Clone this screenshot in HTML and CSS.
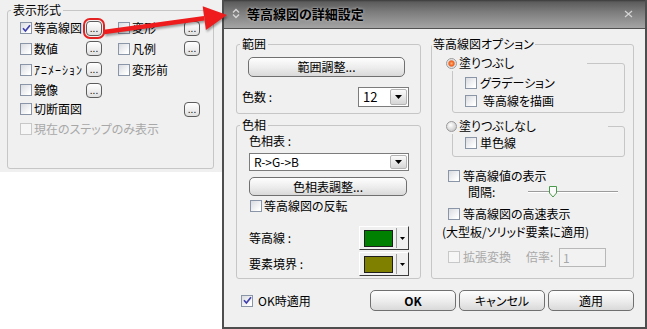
FILE: index.html
```html
<!DOCTYPE html>
<html>
<head>
  <meta charset="utf-8">
  <title>等高線図の詳細設定</title>
  <link rel="stylesheet" href="styles.css">
</head>
<body>
  <div class="desktop">
    <!-- 元のパネル -->
    <div class="side-panel">
      <fieldset class="group display-group">
        <legend>表示形式</legend>
        <div class="display-grid">
          <label class="check c1"><span class="box"><svg width="9" height="9" viewBox="0 0 9 9"><path d="M1 4.3 L3.4 7 L8 1.3" fill="none" stroke="#3f3fae" stroke-width="1.7"/></svg></span>等高線図</label>
          <button class="dots marked">...</button>
          <label class="check"><span class="box"></span>変形</label>
          <button class="dots">...</button>

          <label class="check c1"><span class="box"></span>数値</label>
          <button class="dots">...</button>
          <label class="check"><span class="box"></span>凡例</label>
          <button class="dots">...</button>

          <label class="check c1"><span class="box"></span><span class="narrow">ｱﾆﾒｰｼｮﾝ</span></label>
          <button class="dots">...</button>
          <label class="check"><span class="box"></span>変形前</label>

          <label class="check c1"><span class="box"></span>鏡像</label>
          <button class="dots">...</button>

          <label class="check c1-3"><span class="box"></span>切断面図</label>
          <button class="dots c4">...</button>

          <label class="check disabled c-all"><span class="box"></span>現在のステップのみ表示</label>
        </div>
      </fieldset>
    </div>

    <!-- 詳細設定ダイアログ -->
    <div class="dialog">
      <div class="titlebar">
        <svg class="title-icon" width="8" height="11" viewBox="0 0 8 11"><path d="M1 4.5 L4 1.5 L7 4.5 M1 6.5 L4 9.5 L7 6.5" fill="none" stroke="#d6d6d6" stroke-width="1.4"/></svg>
        <span class="title-text">等高線図の詳細設定</span>
        <svg class="close" width="9" height="8" viewBox="0 0 9 8"><path d="M1 1 L8 7 M8 1 L1 7" fill="none" stroke="#d4d4d4" stroke-width="1.2"/></svg>
      </div>

      <div class="dialog-body">
        <div class="columns">
          <div class="left-col">
            <fieldset class="group range-group">
              <legend>範囲</legend>
              <button class="btn range-btn">範囲調整...</button>
              <div class="field-row range-row">
                <span>色数 :</span>
                <div class="combo count-combo">
                  <span class="combo-value">12</span>
                  <span class="combo-arrow"><svg width="7" height="4" viewBox="0 0 7 4"><path d="M0 0 H7 L3.5 4 Z" fill="#000"/></svg></span>
                </div>
              </div>
            </fieldset>

            <fieldset class="group hue-group">
              <legend>色相</legend>
              <div class="plain-label">色相表 :</div>
              <div class="combo table-combo">
                <span class="combo-value">R-&gt;G-&gt;B</span>
                <span class="combo-arrow"><svg width="7" height="4" viewBox="0 0 7 4"><path d="M0 0 H7 L3.5 4 Z" fill="#000"/></svg></span>
              </div>
              <button class="btn table-btn">色相表調整...</button>
              <label class="check invert-row"><span class="box"></span>等高線図の反転</label>
              <div class="field-row color-row first">
                <span>等高線 :</span>
                <div class="picker">
                  <span class="swatch green"></span>
                  <span class="picker-arrow"><svg width="5" height="3" viewBox="0 0 5 3"><path d="M0 0 H5 L2.5 3 Z" fill="#000"/></svg></span>
                </div>
              </div>
              <div class="field-row color-row">
                <span>要素境界 :</span>
                <div class="picker">
                  <span class="swatch olive"></span>
                  <span class="picker-arrow"><svg width="5" height="3" viewBox="0 0 5 3"><path d="M0 0 H5 L2.5 3 Z" fill="#000"/></svg></span>
                </div>
              </div>
            </fieldset>
          </div>

          <fieldset class="group options-group">
            <legend>等高線図オプション</legend>

            <fieldset class="sub fill-sub">
              <legend><span class="radio on"></span>塗りつぶし</legend>
              <label class="check opt"><span class="box"></span>グラデーション</label>
              <label class="check opt"><span class="box"></span><span class="pad">等高線を描画</span></label>
            </fieldset>

            <fieldset class="sub nofill-sub">
              <legend><span class="radio"></span>塗りつぶしなし</legend>
              <label class="check opt"><span class="box"></span>単色線</label>
            </fieldset>

            <label class="check opt outer value-row"><span class="box"></span>等高線値の表示</label>
            <div class="interval-row">
              <span class="interval-label">間隔:</span>
              <svg width="92" height="14" viewBox="0 0 92 14">
                <line x1="0" y1="6.5" x2="90" y2="6.5" stroke="#9c9c9c" stroke-width="1"/>
                <line x1="0" y1="7.5" x2="90" y2="7.5" stroke="#ffffff" stroke-width="1"/>
                <path d="M21.5 1.5 H28.5 V8 L25 12 L21.5 8 Z" fill="#fafafa" stroke="#4b9a4b" stroke-width="1"/>
              </svg>
            </div>
            <label class="check opt outer fast-row"><span class="box"></span>等高線図の高速表示</label>
            <div class="note">(大型板/ソリッド要素に適用)</div>
            <div class="scale-row disabled">
              <label class="check opt"><span class="box"></span>拡張変換</label>
              <span class="scale-label">倍率:</span>
              <span class="scale-input">1</span>
            </div>
          </fieldset>
        </div>

        <div class="footer">
          <label class="check opt apply-check"><span class="box"><svg width="9" height="9" viewBox="0 0 9 9"><path d="M1 4.3 L3.4 7 L8 1.3" fill="none" stroke="#3f3fae" stroke-width="1.7"/></svg></span>OK時適用</label>
          <div class="actions">
            <button class="btn action ok">OK</button>
            <button class="btn action">キャンセル</button>
            <button class="btn action">適用</button>
          </div>
        </div>
      </div>
    </div>

    <!-- 指示の矢印 -->
    <svg class="pointer" width="240" height="40" viewBox="0 0 240 40">
      <polygon points="104.3,34.2 103.7,29.8 203.9,16 204.5,20.4" fill="#ee1c1c"/>
      <polygon points="202.7,6.2 227,15 205.9,30" fill="#ee1c1c"/>
    </svg>
  </div>
</body>
</html>
```

FILE: styles.css
```css
/* 等高線図の詳細設定 */
* {
  box-sizing: border-box;
}
html, body {
  margin: 0;
}
body {
  width: 647px;
  height: 329px;
  overflow: hidden;
  background: #fff;
  font-family: "Noto Sans CJK JP", "Noto Sans", sans-serif;
  font-size: 12px;
  line-height: 16px;
  color: #000;
  font-feature-settings: "palt";
}
.desktop {
  position: relative;
  width: 647px;
  height: 329px;
}

/* group boxes */
fieldset.group,
fieldset.sub {
  margin: 0;
  padding: 0;
  min-width: 0;
  border: 1px solid #c6c6c6;
  border-radius: 3px;
}
.group > legend {
  padding: 0 2px;
  line-height: 16px;
}

/* left panel */
.side-panel {
  width: 222px;
  height: 172px;
  background: #f0f0f0;
  padding: 2px 8px 0 7px;
}
.display-group {
  height: 167px;
}
.display-group > legend {
  margin-left: 3px;
}
.display-grid {
  display: grid;
  grid-template-columns: 66px 32px 66px 16px;
  grid-template-rows: 20px 21px 21px 20px 18px 22px;
  align-items: center;
  margin-left: 12px;
}
.c1 { grid-column: 1; }
.c1-3 { grid-column: 1 / 4; }
.c4 { grid-column: 4; }
.c-all { grid-column: 1 / -1; }
.narrow {
  font-feature-settings: normal;
  letter-spacing: 1px;
}

/* check boxes and radios */
.check {
  display: flex;
  align-items: center;
  white-space: nowrap;
}
.box {
  flex: none;
  width: 12px;
  height: 12px;
  margin-right: 2px;
  border: 1px solid #8a96a8;
  background: linear-gradient(135deg, #d9dbe0, #ffffff 85%);
  display: flex;
  align-items: center;
  justify-content: center;
}
.disabled {
  color: #a8a8a8;
}
.disabled .box {
  border-color: #c8c8c8;
  background: #f6f6f6;
}
.radio {
  flex: none;
  width: 11px;
  height: 11px;
  margin-right: 2px;
  border-radius: 50%;
  border: 1px solid #9a9a9a;
  background: radial-gradient(circle at 40% 35%, #ffffff, #d0d0d0 70%, #b4b4b4);
}
.radio.on {
  background: radial-gradient(circle at 50% 50%, #ffb27a 0, #f05a14 2.6px, #d8d8d8 3.6px, #f6f6f6 5px);
}

/* buttons */
.dots {
  width: 16px;
  height: 15px;
  padding: 0 0 2px;
  border: 1px solid #5c5c5c;
  border-radius: 4px;
  background: linear-gradient(#ffffff, #e0e0e0);
  font: 10px/8px "Liberation Sans", sans-serif;
  color: #000;
  display: flex;
  align-items: flex-end;
  justify-content: center;
}
.dots.marked {
  outline: 2px solid #e52222;
  outline-offset: 1px;
}
.btn {
  display: block;
  height: 20px;
  padding: 0;
  border: 1px solid #707070;
  border-radius: 5px;
  background: linear-gradient(#fefefe, #ececec 55%, #d9d9d9);
  font: inherit;
  color: #000;
}

/* dialog window */
.dialog {
  position: absolute;
  left: 222px;
  top: 0;
  width: 425px;
  height: 329px;
  background: #f0f0f0;
  border: 2px solid #4e4e4e;
  border-top: 0;
  display: flex;
  flex-direction: column;
}
.titlebar {
  flex: none;
  height: 29px;
  display: flex;
  align-items: center;
  padding: 0 12px 1px 8px;
  background: linear-gradient(#3a3a3a 0, #5c5c5c 2px, #7a7a7a 40%, #a4a4a4 100%);
  border-bottom: 1px solid #505050;
}
.title-icon {
  margin-right: 7px;
}
.title-text {
  font-size: 13px;
  font-weight: 700;
  color: #000;
  text-shadow: 0 0 3px rgba(255, 255, 255, 0.6);
}
.close {
  margin-left: auto;
}
.dialog-body {
  flex: 1;
  padding: 7px 11px 0 12px;
  display: flex;
  flex-direction: column;
}
.columns {
  display: grid;
  grid-template-columns: 185px 203px;
  column-gap: 10px;
}

/* 範囲 */
.range-group {
  padding: 5px 11px 6px 5px !important;
}
.range-group > legend {
  margin-left: -2px;
}
.range-btn {
  width: 157px;
  margin-left: 6px;
}
.field-row {
  display: flex;
  align-items: center;
  justify-content: space-between;
}
.range-row {
  margin-top: 10px;
  height: 20px;
}
.combo {
  display: flex;
  height: 20px;
  border: 1px solid #7c7c7c;
  background: #fff;
}
.count-combo {
  width: 51px;
}
.combo-value {
  flex: 1;
  padding-left: 4px;
  line-height: 17px;
  font-size: 13px;
}
.combo-arrow {
  width: 17px;
  margin: 1px;
  border: 1px solid #b4b4b4;
  border-radius: 2px;
  background: linear-gradient(#fbfbfb, #d6d6d6);
  display: flex;
  align-items: center;
  justify-content: center;
}

/* 色相 */
.hue-group {
  margin-top: 3px !important;
  padding: 0 11px 2px 12px !important;
}
.hue-group > legend {
  margin-left: -9px;
}
.table-combo {
  height: 18px;
  margin-top: 4px;
}
.table-combo .combo-value {
  line-height: 16px;
  font-size: 12px;
}
.table-btn {
  width: 158px;
  height: 19px;
  margin-top: 6px;
}
.invert-row {
  margin-top: 2px;
  margin-left: 1px;
}
.color-row {
  height: 24px;
  margin-top: 2px;
}
.color-row.first {
  margin-top: 12px;
}
.picker {
  width: 50px;
  height: 24px;
  display: flex;
  align-items: center;
  border: 1px solid;
  border-color: #ffffff #3c3c3c #3c3c3c #ffffff;
  background: #f0f0f0;
}
.swatch {
  width: 29px;
  height: 17px;
  margin: 0 3px 0 4px;
  border: 1px solid #1e1e1e;
}
.swatch.green {
  background: #008000;
}
.swatch.olive {
  background: #808000;
}
.picker-arrow {
  height: 20px;
  flex: 1;
  border-left: 1px solid #a0a0a0;
  display: flex;
  align-items: center;
  justify-content: center;
}

/* 等高線図オプション */
.options-group {
  padding: 3px 8px 0 20px !important;
}
.options-group > legend {
  margin-left: -20px;
  padding: 0 1px;
}
.sub {
  padding: 3px 0 2px 12px !important;
}
.sub > legend {
  display: flex;
  align-items: center;
  height: 16px;
  padding: 0;
  margin-left: -19px;
}
.fill-sub > legend {
  width: 141px;
}
.nofill-sub {
  margin-top: 5px !important;
  padding: 0 0 4px 12px !important;
}
.nofill-sub > legend {
  width: 162px;
}
.opt {
  height: 18px;
}
.opt .box {
  margin-right: 3px;
}
.pad {
  padding-left: 3px;
}
.outer {
  margin-left: -4px;
}
.value-row {
  margin-top: 10px;
}
.interval-row {
  display: flex;
  align-items: center;
  height: 16px;
  margin-top: -1px;
  margin-left: 16px;
}
.interval-label {
  width: 60px;
}
.fast-row {
  margin-top: 5px;
}
.note {
  margin-top: 1px;
  margin-left: -10px;
}
.scale-row {
  display: flex;
  align-items: center;
  height: 20px;
  margin-top: 7px;
  margin-left: -4px;
}
.scale-label {
  width: 33px;
  margin-left: 15px;
}
.scale-input {
  width: 47px;
  height: 19px;
  padding-left: 3px;
  border: 1px solid #b8b8b8;
  background: #f2f2f2;
  line-height: 17px;
}

/* bottom row */
.footer {
  display: flex;
  align-items: center;
  height: 21px;
  margin-top: 11px;
}
.apply-check {
  margin-left: 5px;
}
.apply-check .box {
  margin-right: 5px;
}
.actions {
  display: flex;
  gap: 3px;
  margin-left: auto;
}
.action {
  width: 86px;
  height: 21px;
}
.ok {
  font-weight: 700;
}

/* arrow drawn over both windows */
.pointer {
  position: absolute;
  left: 0;
  top: 0;
  pointer-events: none;
  filter: drop-shadow(1px 2px 1px rgba(0, 0, 0, 0.35));
}
```
